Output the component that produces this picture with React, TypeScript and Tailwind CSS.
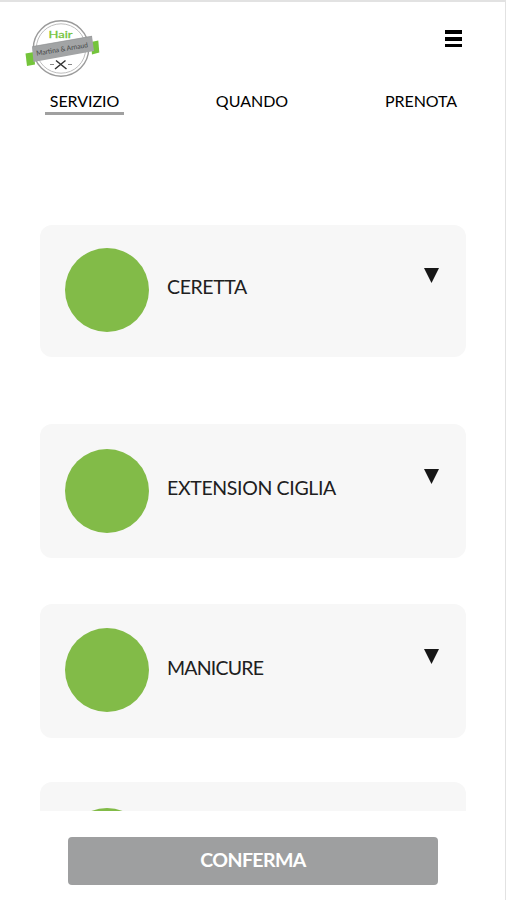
import React from "react";

const tabs = [
    { label: "SERVIZIO", box: "w-[79px] ml-[45px]", text: "tracking-[-0.05px]", active: true },
    { label: "QUANDO", box: "w-[80px] ml-[88px]", text: "tracking-[0px]", active: false },
    { label: "PRENOTA", box: "w-[80px] ml-[89px]", text: "tracking-[-0.1px]", active: false },
];

const services = [
    { name: "CERETTA", card: "h-[132px] pt-[23px]", text: "mt-[25px] tracking-[-0.4px]", arrow: "mt-5" },
    { name: "EXTENSION CIGLIA", card: "h-[134px] pt-[25px] mt-[67px]", text: "mt-[25px] tracking-[-0.35px]", arrow: "mt-5" },
    { name: "MANICURE", card: "h-[134px] pt-[24px] mt-[46px]", text: "mt-[26px] tracking-[-0.8px]", arrow: "mt-[21px]" },
    { name: "", card: "h-[134px] pt-[26px] mt-[44px]", text: "", arrow: "mt-5" },
];

const Logo = () => (
    <svg width="84" height="66" viewBox="20 14 84 66" className="block">
        <circle cx="61" cy="48.5" r="27.7" fill="#fff" stroke="#9b9b9b" strokeWidth="1.4" />
        <circle cx="61" cy="48.5" r="24.7" fill="none" stroke="#bdbdbd" strokeWidth="1" />
        <path d="M25.5 53.5L34 52L35 64.5L27 66Z" fill="#74c43b" />
        <path d="M91 42L98.3 40.5L99.3 52.5L92 54.5Z" fill="#74c43b" />
        <path d="M32 46.5L92 36L94 51L33.5 62Z" fill="#a2a4a5" />
        <path d="M32.7 46.5L92 36.2" stroke="#8d8f90" strokeWidth="0.6" />
        <text x="60.5" y="38" textAnchor="middle" textLength="24" lengthAdjust="spacingAndGlyphs" fontFamily="Lato, sans-serif" fontSize="10" fill="#74c43b" stroke="#74c43b" strokeWidth="0.3">Hair</text>
        <text x="62" y="51.5" textAnchor="middle" textLength="52" lengthAdjust="spacingAndGlyphs" fontFamily="Lato, sans-serif" fontSize="7" fill="#424445" transform="rotate(-9.5 62 49)">Martina &amp; Arnaud</text>
        <path d="M56 60.5L66.5 69M65.5 60.5L55 69" stroke="#333" strokeWidth="1.5" />
        <path d="M50 64.5H54M68 64.5H72" stroke="#888" strokeWidth="1" />
    </svg>
);

type ServiceCardProps = { name: string; card: string; text: string; arrow: string };

const ServiceCard = ({ name, card, text, arrow }: ServiceCardProps) => (
    <div className={`flex shrink-0 items-start rounded-xl bg-[#f7f7f7] pl-[25px] pr-[27px] ${card}`}>
        <div className="size-[84px] shrink-0 rounded-full bg-[#82bb48]" />
        <span className={`ml-[18px] flex-1 whitespace-nowrap text-[19.5px] leading-7 text-[#202020] ${text}`}>{name}</span>
        <svg width="15" height="15" viewBox="0 0 15 15" className={arrow}>
            <path d="M0 0H15L7.5 15Z" fill="#171717" />
        </svg>
    </div>
);

const App = () => {
    return (
        <div className="flex h-[900px] w-[506px] flex-col overflow-hidden border-r border-t-2 border-[#e2e2e2] bg-white font-['Lato',sans-serif]">
            {/* HEADER */}
            <header className="flex h-[78px] shrink-0 items-start justify-between pl-5 pr-[43px] pt-3">
                <Logo />
                <button aria-label="Menu" className="mt-4 flex w-[17px] flex-col gap-[3px]">
                    <span className="h-1 bg-black" />
                    <span className="h-1 bg-black" />
                    <span className="h-[3px] bg-black" />
                </button>
            </header>

            {/* TABS */}
            <nav className="flex h-[35px] shrink-0 pt-2">
                {tabs.map((tab) => (
                    <div
                        key={tab.label}
                        className={`flex h-[27px] justify-center border-b-[3px] pt-px ${tab.box} ${tab.active ? "border-[#a0a0a0]" : "border-transparent"}`}
                    >
                        <span className={`whitespace-nowrap text-[16px] leading-6 text-black ${tab.text}`}>{tab.label}</span>
                    </div>
                ))}
            </nav>

            {/* SERVICES */}
            <main className="flex h-[696px] shrink-0 flex-col overflow-hidden pl-10 pr-[39px] pt-[110px]">
                {services.map((it, i) => (
                    <ServiceCard key={i} {...it} />
                ))}
            </main>

            <footer className="pl-[68px] pr-[67px] pt-[26px]">
                <button className="h-[48px] w-full rounded bg-[#9e9fa0] pb-0.5 text-[19.5px] font-bold tracking-[-0.6px] text-white">CONFERMA</button>
            </footer>
        </div>
    );
};

export default App;
